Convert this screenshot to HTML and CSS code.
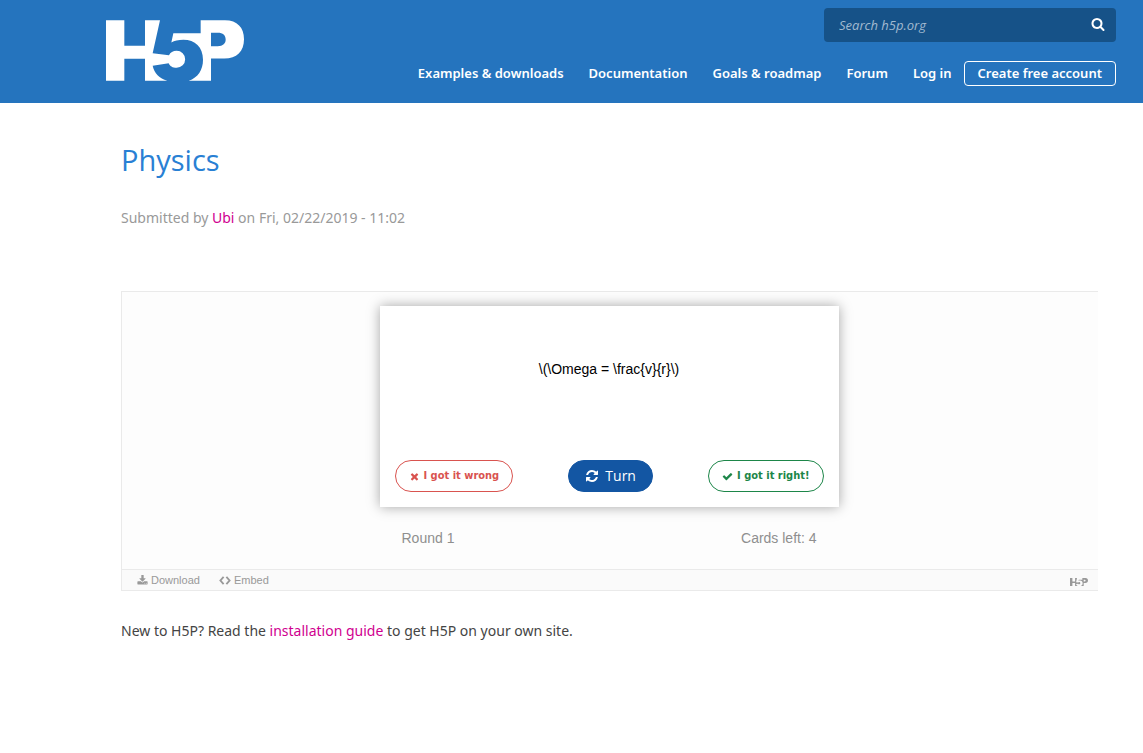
FILE: index.html
```html
<!DOCTYPE html>
<html lang="en">
<head>
<meta charset="utf-8">
<title>Physics | H5P</title>
<link rel="stylesheet" href="styles.css">
</head>
<body>
<header class="site-header">
  <a class="logo" href="#" aria-label="H5P home">
    <svg viewBox="33 31 414 182" aria-hidden="true"><path fill="currentColor" fill-rule="evenodd" d="M33 31H88V108H150V31H195L173 130L222 136C226 128 234 123 245 123A25 25 0 0 1 245 174C233 174 224 168 221 160L173 168C178 190 193 207 217 213H150V147H88V213H33ZM317 31H390C427 31 447 53 447 88C447 125 425 146 388 146H348V213H281C309 204 324 180 324 150C324 112 300 90 265 90C250 90 238 93 229 98L235 70H317ZM348 69V109H368C384 109 392 101 392 89S384 69 368 69Z"/></svg>
  </a>
  <div class="header-tools">
    <form class="search">
      <input class="search-input" type="search" placeholder="Search h5p.org" aria-label="Search h5p.org">
      <button class="search-button" type="button" aria-label="Search"><svg class="icon" viewBox="0 0 1792 1792"><path d="M1216 832q0-185-131.500-316.500t-316.500-131.500-316.500 131.500-131.500 316.500 131.500 316.500 316.500 131.500 316.500-131.500 131.500-316.500zm512 832q0 52-38 90t-90 38q-54 0-90-38l-343-342q-179 124-399 124-143 0-273.500-55.500t-225-150-150-225-55.500-273.500 55.500-273.500 150-225 225-150 273.500-55.500 273.500 55.500 225 150 150 225 55.500 273.500q0 220-124 399l343 343q37 37 37 90z"/></svg></button>
    </form>
    <nav class="menu">
      <a href="#">Examples &amp; downloads</a>
      <a href="#">Documentation</a>
      <a href="#">Goals &amp; roadmap</a>
      <a href="#">Forum</a>
      <a href="#">Log in</a>
      <a class="signup" href="#">Create free account</a>
    </nav>
  </div>
</header>
<main class="content">
  <h1 class="title">Physics</h1>
  <p class="submitted">Submitted by <a href="#">Ubi</a> on Fri, 02/22/2019 - 11:02</p>
  <section class="player">
    <div class="stage">
      <div class="deck">
        <article class="card">
          <p class="question">\(\Omega = \frac{v}{r}\)</p>
          <div class="actions">
            <button class="answer wrong" type="button"><svg class="icon" viewBox="0 0 1792 1792"><path d="M1490 1322q0 40-28 68l-136 136q-28 28-68 28t-68-28l-294-294-294 294q-28 28-68 28t-68-28l-136-136q-28-28-28-68t28-68l294-294-294-294q-28-28-28-68t28-68l136-136q28-28 68-28t68 28l294 294 294-294q28-28 68-28t68 28l136 136q28 28 28 68t-28 68l-294 294 294 294q28 28 28 68z"/></svg>I got it wrong</button>
            <button class="turn" type="button"><svg class="icon" viewBox="0 0 1792 1792"><path d="M1639 1056q0 5-1 7-64 268-268 434.500t-478 166.500q-146 0-282.500-55t-243.500-157l-129 129q-19 19-45 19t-45-19-19-45v-448q0-26 19-45t45-19h448q26 0 45 19t19 45-19 45l-137 137q71 66 161 102t187 36q134 0 250-65t186-179q11-17 53-117 8-23 30-23h192q13 0 22.500 9.500t9.500 22.500zm25-800v448q0 26-19 45t-45 19h-448q-26 0-45-19t-19-45 19-45l138-138q-148-137-349-137-134 0-250 65t-186 179q-11 17-53 117-8 23-30 23h-199q-13 0-22.500-9.500t-9.500-22.500v-7q65-268 270-434.500t480-166.500q146 0 284 55.500t245 156.500l130-129q19-19 45-19t45 19 19 45z"/></svg>Turn</button>
            <button class="answer right" type="button"><svg class="icon" viewBox="0 0 1792 1792"><path d="M1671 566q0 40-28 68l-724 724-136 136q-28 28-68 28t-68-28l-136-136-362-362q-28-28-28-68t28-68l136-136q28-28 68-28t68 28l294 295 656-657q28-28 68-28t68 28l136 136q28 28 28 68z"/></svg>I got it right!</button>
          </div>
        </article>
        <div class="progress"><span>Round 1</span><span>Cards left: 4</span></div>
      </div>
    </div>
    <footer class="player-bar">
      <button class="bar-button" type="button"><svg class="icon" viewBox="0 0 1792 1792"><path d="M1344 1344q0-26-19-45t-45-19-45 19-19 45 19 45 45 19 45-19 19-45zm256 0q0-26-19-45t-45-19-45 19-19 45 19 45 45 19 45-19 19-45zm128-224v320q0 40-28 68t-68 28h-1472q-40 0-68-28t-28-68v-320q0-40 28-68t68-28h465l135 136q58 56 136 56t136-56l136-136h464q40 0 68 28t28 68zm-325-569q17 41-14 70l-448 448q-18 19-45 19t-45-19l-448-448q-31-29-14-70 17-39 59-39h256v-448q0-26 19-45t45-19h256q26 0 45 19t19 45v448h256q42 0 59 39z"/></svg>Download</button>
      <button class="bar-button" type="button"><svg class="icon embed-icon" viewBox="0 0 12 12"><path d="M4.500 2L1 6L4.500 10M7.500 2L11 6L7.500 10"/></svg>Embed</button>
      <a class="bar-logo" href="#" aria-label="H5P"><svg viewBox="33 31 414 182" aria-hidden="true"><path fill="currentColor" fill-rule="evenodd" d="M33 31H88V108H150V31H195L173 130L222 136C226 128 234 123 245 123A25 25 0 0 1 245 174C233 174 224 168 221 160L173 168C178 190 193 207 217 213H150V147H88V213H33ZM317 31H390C427 31 447 53 447 88C447 125 425 146 388 146H348V213H281C309 204 324 180 324 150C324 112 300 90 265 90C250 90 238 93 229 98L235 70H317ZM348 69V109H368C384 109 392 101 392 89S384 69 368 69Z"/></svg></a>
    </footer>
  </section>
  <p class="guide">New to H5P? Read the <a href="#">installation guide</a> to get H5P on your own site.</p>
</main>
</body>
</html>
```
FILE: styles.css
```css
* { box-sizing: border-box; }
body {
  margin: 0;
  background: #fff;
  color: #444;
  font: 14px/20px "Noto Sans", "Open Sans", sans-serif;
}
a { color: #d0008f; text-decoration: none; }
button { margin: 0; cursor: pointer; }
p { margin: 0; }
.icon { display: block; flex: none; width: 14px; height: 14px; fill: currentColor; }

.site-header {
  display: flex;
  justify-content: space-between;
  padding: 8px 27px 17px 106px;
  background: #2574be;
}
.logo { display: block; padding-top: 12px; color: #fff; }
.logo svg { display: block; width: 138px; height: 61px; }
.header-tools { display: flex; flex-direction: column; align-items: flex-end; gap: 19px; }
.search {
  display: flex;
  align-items: center;
  width: 292px;
  height: 34px;
  padding: 0 11px 0 15px;
  border-radius: 4px;
  background: #165288;
}
.search-input {
  flex: 1;
  min-width: 0;
  padding: 0;
  border: 0;
  outline: 0;
  background: none;
  color: #fff;
  font: italic 13px/20px "Open Sans", sans-serif;
}
.search-input::placeholder { color: #a2bad0; opacity: 1; }
.search-button { padding: 0 0 3px; border: 0; background: none; color: #fff; }
.menu { display: flex; align-items: center; gap: 25px; }
.menu a { color: #fff; font-size: 13px; font-weight: 600; line-height: 23px; white-space: nowrap; }
.menu .signup { margin-left: -13px; padding: 0 13px; border: 1px solid #fff; border-radius: 4px; }

.content { padding: 37px 45px 40px 121px; }
.title { margin: 0; color: #2980d4; font: 400 29px/40px "Open Sans", sans-serif; }
.submitted { margin-top: 28px; color: #999; }

.player {
  margin-top: 63px;
  border: solid #eaeaea;
  border-width: 1px 0 1px 1px;
  background: #fdfdfd;
}
.stage { padding: 14px 2px 21px 0; }
.deck { width: 47%; min-width: 459px; margin: 0 auto; color: #8f8f8f; font-family: "Liberation Sans", Arial, sans-serif; }
.card {
  padding: 53px 15px 15px;
  background: #fff;
  box-shadow: 0 0 12px rgba(0, 0, 0, .35);
}
.question { color: #000; text-align: center; }
.actions { display: flex; justify-content: space-between; margin-top: 81px; }
.answer, .turn {
  display: flex;
  align-items: center;
  height: 32px;
  border: 1px solid currentColor;
  border-radius: 16px;
  background: #fff;
}
.answer { gap: 4px; padding: 0 13px; font: bold 11px/20px "DejaVu Sans Condensed", "DejaVu Sans", sans-serif; }
.answer .icon { width: 11px; height: 11px; }
.wrong { color: #d9534f; }
.right { color: #1d8649; }
.turn { gap: 6px; padding: 0 16px; border-color: #1356a3; background: #1356a3; color: #fff; font: 14px/20px "Open Sans", sans-serif; }
.progress { display: flex; justify-content: space-between; padding: 21px 22px 0; }

.player-bar {
  display: flex;
  align-items: center;
  gap: 19px;
  height: 21px;
  padding: 0 10px 0 15px;
  border-top: 1px solid #eaeaea;
  background: #fafafa;
}
.bar-button {
  display: flex;
  align-items: center;
  gap: 3px;
  padding: 0;
  border: 0;
  background: none;
  color: #999;
  font: 11px/20px "Liberation Sans", Arial, sans-serif;
}
.bar-button .icon { width: 11px; height: 11px; }
.bar-button .embed-icon { width: 12px; fill: none; stroke: currentColor; stroke-width: 2; }
.bar-logo { margin-left: auto; padding-top: 3px; color: #999; }
.bar-logo svg { display: block; width: 18px; height: 8px; }
.guide { margin-top: 30px; }
```
